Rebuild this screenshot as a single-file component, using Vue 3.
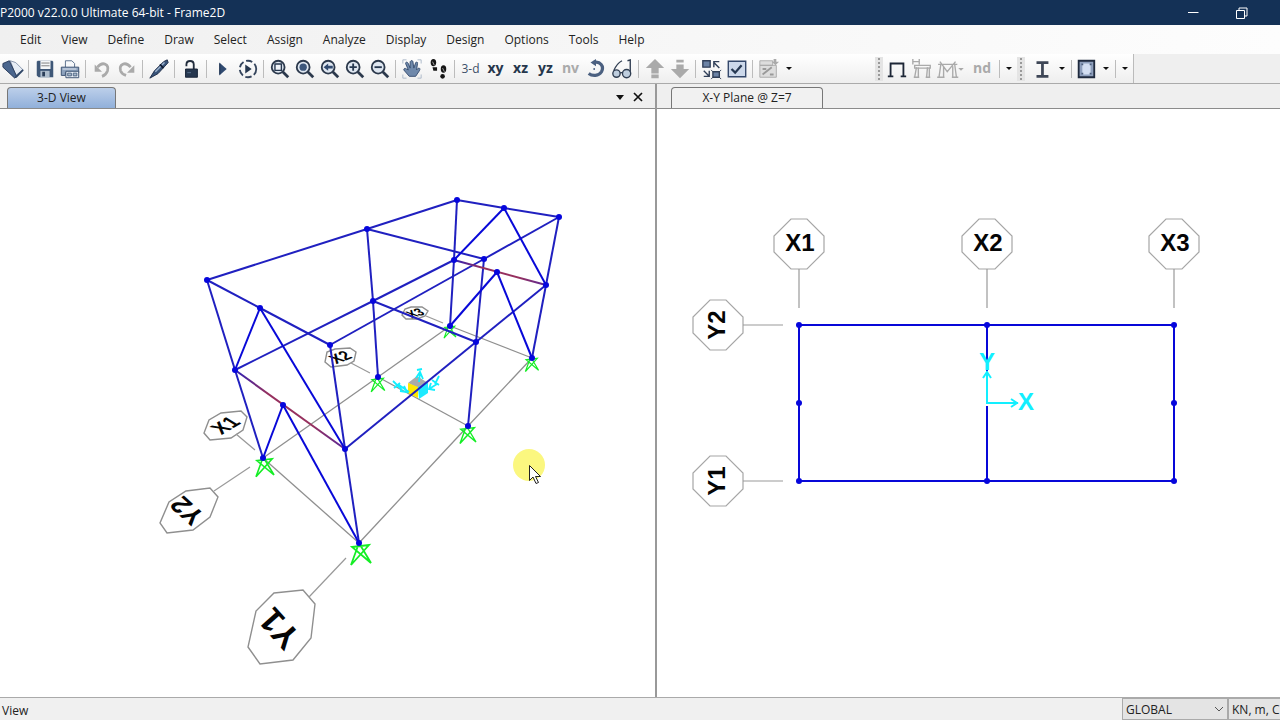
<script setup>
const menus = ['Edit', 'View', 'Define', 'Draw', 'Select', 'Assign', 'Analyze', 'Display', 'Design', 'Options', 'Tools', 'Help']

const joints = {
  A: [207, 280], B: [367, 229], C: [457, 200], D: [504, 208], E: [559, 217],
  F: [260, 308], G: [330, 345], H: [484, 259], I: [235, 370], J: [373, 301],
  K: [454, 260], L: [497, 272], M: [546, 285], N: [476, 342], O: [345, 449],
  P: [283, 405], Q: [263, 458], R: [378, 377], S: [450, 326], T: [532, 358],
  U: [468, 426], V: [359, 543]
}
const toLine = (pair) => {
  const [a, b] = pair
  return { id: pair, x1: joints[a][0], y1: joints[a][1], x2: joints[b][0], y2: joints[b][1] }
}
const gridLines = 'QR RS ST TU UV VQ RU'.split(' ').map(toLine)
const members = 'AB BC CD DE EH HG GF FA BH AI IQ BJ JR CK KS EM MT HN NU GO OV IJ JK MN NO JN'.split(' ').map(toLine)
const braces = 'FI FO DK DM PQ PV LS LT'.split(' ').map(toLine)
const beams = 'IO KM'.split(' ').map(toLine)

const supports = [
  { x: 361, y: 543, s: 1 },
  { x: 265, y: 457, s: 0.9 },
  { x: 468, y: 426, s: 0.8 },
  { x: 532, y: 357, s: 0.66 },
  { x: 378, y: 377, s: 0.68 },
  { x: 450, y: 325, s: 0.6 }
]

const bubbles3d = [
  { text: 'Y1', pts: '274,593 303,590 315,604 311,638 293,660 260,664 248,647 256,611', line: [309, 597, 346, 558], x: 279, y: 629, size: 34, t: 'rotate(228)' },
  { text: 'Y2', pts: '186,491 210,488 218,497 210,517 193,530 167,533 160,523 169,502', line: [214, 491, 250, 467], x: 187, y: 511, size: 26, t: 'rotate(222) skewX(-12)' },
  { text: 'X1', pts: '221,413 241,411 247,417 243,430 231,438 210,440 204,433 209,420', line: [236, 434, 255, 450], x: 225, y: 425, size: 19, t: 'rotate(-30) skewX(28)' },
  { text: 'X2', pts: '335,349 350,348 356,352 354,361 347,365 331,367 325,362 327,352', line: [351, 363, 370, 373], x: 340, y: 357, size: 15, t: 'rotate(-22) skewX(28)' },
  { text: 'X3', pts: '411,307 422,307 428,311 425,316 417,319 406,319 402,315 405,309', line: [426, 316, 443, 323], x: 415, y: 313, size: 12, t: 'rotate(-18) skewX(30)' }
]

const octagon = '-8,-25 8,-25 25,-8 25,8 8,25 -8,25 -25,8 -25,-8'
const bubblesX = [{ text: 'X1', x: 799 }, { text: 'X2', x: 987 }, { text: 'X3', x: 1174 }]
const bubblesY = [{ text: 'Y2', y: 325 }, { text: 'Y1', y: 481 }]
const planJoints = [[799, 325], [987, 325], [1174, 325], [799, 403], [1174, 403], [799, 481], [987, 481], [1174, 481]]
</script>

<template>
  <div class="app">
    <header class="titlebar">
      <h1>P2000 v22.0.0 Ultimate 64-bit - Frame2D</h1>
      <button class="win" aria-label="Minimize">
        <svg width="12" height="12" viewBox="0 0 12 12"><path d="M1 5.500h10.500" stroke="#fff" /></svg>
      </button>
      <button class="win" aria-label="Restore">
        <svg width="12" height="12" viewBox="0 0 12 12" fill="none" stroke="#fff"><path d="M.5 3.500h8v8h-8zM3 3.500v-2.500h8v8h-2.500" /></svg>
      </button>
    </header>

    <nav class="menu">
      <button v-for="m in menus" :key="m">{{ m }}</button>
    </nav>

    <div class="toolrow">
      <div class="tools main-tools">
        <button aria-label="New model">
          <svg viewBox="0 0 24 24">
            <path d="M9 3l6 2 8 8-8 6z" fill="#e7edf5" stroke="#8392a8" />
            <path d="M1 6l7-3 8 17-2 2L1 10z" fill="#4b668e" stroke="#26395a" />
            <path d="M15 21l8-8" stroke="#304767" stroke-width="2" />
          </svg>
        </button>
        <i class="sep"></i>
        <button aria-label="Save">
          <svg viewBox="0 0 24 24">
            <path d="M4 3h16l1 1v17H5l-2-2V4z" fill="#3e5777" />
            <path d="M7 3h11v9H7z" fill="#f4f6f8" /><path d="M8 5.500h9M8 8.500h9" stroke="#777" />
            <path d="M7 14h10v7H7z" fill="#aebdcd" /><path d="M9 15h3v5H9z" fill="#2b3e59" />
          </svg>
        </button>
        <button aria-label="Print">
          <svg viewBox="0 0 24 24">
            <path d="M7 10V3h7l3 3v4" fill="#f6f8fa" stroke="#536987" />
            <path d="M2.500 10h19v6H7v3H2.500z" fill="#8da2bd" stroke="#354c6c" />
            <path d="M7.500 14.500h14v7h-14z" fill="#e8eef6" stroke="#354c6c" />
            <path d="M9.500 16.500h4v3h-4zM15.500 16.500h4v3h-4z" fill="#a9b9cd" stroke="#48607f" />
            <path d="M4 12h15" stroke="#e9eef5" />
          </svg>
        </button>
        <i class="sep"></i>
        <button aria-label="Undo">
          <svg viewBox="0 0 24 24" fill="none" stroke="#aaa" stroke-width="3"><path d="M7 10c6-7 13-3 11 4-1 3-3 5-6 6" /><path d="M4 7v8h8z" fill="#aaa" stroke="none" /></svg>
        </button>
        <button aria-label="Redo">
          <svg viewBox="0 0 24 24" fill="none" stroke="#aaa" stroke-width="3"><path d="M16 10C10 3 3 7 5 14c1 3 3 4 6 5" /><path d="M20 8v8h-8z" fill="#aaa" stroke="none" /></svg>
        </button>
        <i class="sep"></i>
        <button aria-label="Refresh">
          <svg viewBox="0 0 24 24">
            <path d="M2 22l5-8L17 4l4-2 1 3-11 12z" fill="#39547a" stroke="#1b2a45" />
            <path d="M8 15L18 5" stroke="#9eb4cf" stroke-width="1.500" /><path d="M13 7l4 4" stroke="#111c33" stroke-width="2" />
          </svg>
        </button>
        <i class="sep"></i>
        <button aria-label="Unlock model">
          <svg viewBox="0 0 24 24"><path d="M7 9V7c0-5 8-5 8 0v5" fill="none" stroke="#222d3d" stroke-width="2" /><path d="M6 12h13v9H6z" fill="#26374f" stroke="#162236" /><path d="M8 16h4" stroke="#5d7595" /></svg>
        </button>
        <i class="sep"></i>
        <button aria-label="Run">
          <svg viewBox="0 0 24 24"><path d="M8 5v14l8-7z" fill="#304a70" /><path d="M8.500 6v12" stroke="#182b49" /></svg>
        </button>
        <button aria-label="Run options">
          <svg viewBox="0 0 24 24"><circle cx="12" cy="12" r="9" fill="none" stroke="#34445c" stroke-width="2" stroke-dasharray="7 3" /><path d="M9 7v10l7-5z" fill="#26374f" /></svg>
        </button>
        <i class="sep"></i>
        <button aria-label="Rubber band zoom">
          <svg viewBox="0 0 24 24"><circle cx="10" cy="10" r="7" class="lens" /><path d="M15 15l6 6" class="handle" /><path d="M6.500 6.500h7v7h-7z" fill="#f0f4f9" stroke="#26374f" stroke-width="1.500" /></svg>
        </button>
        <button aria-label="Restore full view">
          <svg viewBox="0 0 24 24"><circle cx="10" cy="10" r="7" class="lens" /><path d="M15 15l6 6" class="handle" /><circle cx="10" cy="10" r="4" fill="#3c567b" /></svg>
        </button>
        <button aria-label="Previous zoom">
          <svg viewBox="0 0 24 24"><circle cx="10" cy="10" r="7" class="lens" /><path d="M15 15l6 6" class="handle" /><path d="M5 10l5-4v2.500h5v3h-5V14z" fill="#304a70" /></svg>
        </button>
        <button aria-label="Zoom in">
          <svg viewBox="0 0 24 24"><circle cx="10" cy="10" r="7" class="lens" /><path d="M15 15l6 6" class="handle" /><path d="M6 10h8M10 6v8" stroke="#26374f" stroke-width="2" /></svg>
        </button>
        <button aria-label="Zoom out">
          <svg viewBox="0 0 24 24"><circle cx="10" cy="10" r="7" class="lens" /><path d="M15 15l6 6" class="handle" /><path d="M6 10h8" stroke="#26374f" stroke-width="2" /></svg>
        </button>
        <i class="sep"></i>
        <button aria-label="Pan">
          <svg viewBox="0 0 24 24">
            <path d="M2 6V2h4M18 2h4v4M2 18v4h4M18 22h4v-4" fill="none" stroke="#aab7c8" />
            <path d="M9 20l-6-7c0-2 2-2 3-1l2 1-3-7c0-2 2-2 3 0l2 5V4c1-2 3-1 3 0l1 7 2-6c1-1 3 0 2 1l-1 7 2-2c2 0 2 1 1 3l-4 6z" fill="#6f89ab" stroke="#344c6e" />
          </svg>
        </button>
        <button class="wide" aria-label="Walk">
          <svg viewBox="0 0 24 24"><g fill="#151515"><ellipse cx="7" cy="5" rx="3" ry="4" /><path d="M6 10h5v4H7z" /><ellipse cx="18" cy="12" rx="3" ry="4" /><ellipse cx="17" cy="20" rx="2.500" ry="2.500" /></g><path d="M6 4l2 4M17 11l2 4" stroke="#aaa" /></svg>
        </button>
        <i class="sep"></i>
        <button class="txt light">3-d</button>
        <button class="txt">xy</button>
        <button class="txt">xz</button>
        <button class="txt">yz</button>
        <button class="txt dim">nv</button>
        <button aria-label="Rotate view">
          <svg viewBox="0 0 24 24"><path d="M9 5c8-2 12 4 9 10-3 5-10 5-14 2" fill="none" stroke="#4b6080" stroke-width="3.500" /><path d="M12 1v8L6 5z" fill="#4b6080" /><circle cx="10" cy="12" r="1" fill="#4b6080" /></svg>
        </button>
        <button class="wide" aria-label="Perspective">
          <svg viewBox="0 0 24 24" fill="#bfcede" stroke="#303e52" stroke-width="1.500"><circle cx="6" cy="17" r="4" /><circle cx="17" cy="17" r="4.500" /><path d="M3 14c2-5 5-9 9-11M21 15V2l-3 1M10 16h3" fill="none" /></svg>
        </button>
        <i class="sep"></i>
        <button aria-label="Move up">
          <svg viewBox="0 0 24 24"><path d="M12 1l10 10h-6v6H8v-6H2zM8 18h8v4H8z" fill="#aaa" /></svg>
        </button>
        <button aria-label="Move down">
          <svg viewBox="0 0 24 24"><path d="M8 2h8v3H8zM8 7h8v5h6L12 22 2 12h6z" fill="#aaa" /></svg>
        </button>
        <i class="sep"></i>
        <button aria-label="Shrink objects">
          <svg viewBox="0 0 24 24" fill="none" stroke="#303f58" stroke-width="1.500"><path d="M2 3h8v7H2zM13 15h7v6h-7z" fill="#6c83a5" /><path d="M20 11l-6-6M14 10V4h6M3 14l6 6M9 14v6H3" /><path d="M11 13l2 2M20 15l2-2M13 21l-2 2M20 21l2 2" stroke-width="1" /></svg>
        </button>
        <button aria-label="Display options">
          <svg viewBox="0 0 24 24"><path d="M2.500 3.500h19v17h-19z" fill="#ccd8ea" stroke="#33476a" stroke-width="1.500" /><path d="M6 12l4 4 7-8" fill="none" stroke="#263852" stroke-width="2.500" /></svg>
        </button>
        <i class="sep"></i>
        <button aria-label="Assign to group">
          <svg viewBox="0 0 24 24"><path d="M2 3h14v5H2zM2 8h18v13H2z" fill="#ddd" stroke="#aaa" /><path d="M5 18l10-8M5 12h4M13 18h4" stroke="#999" stroke-width="2" /><path d="M17 1h3v3h3l-4 4-4-4h2z" fill="#aaa" /></svg>
        </button>
        <button class="drop" aria-label="More group commands"><i class="tri"></i></button>
      </div>

      <div class="tools side-tools">
        <i class="grip"></i>
        <button aria-label="Frame shape">
          <svg viewBox="0 0 24 24"><path d="M5 20V6h14v14M2 20h6M16 20h6" fill="none" stroke="#1d2636" stroke-width="2" /></svg>
        </button>
        <button aria-label="Frame loads">
          <svg viewBox="0 0 24 24" fill="none" stroke="#aaa" stroke-width="1.500"><path d="M2 1v6M9 1v6M2 4h7M4 8h17v3H4zM6 10L4 21M8 10v11M18 10l-1 11M20 10v11M3 21h6M16 21h5" /></svg>
        </button>
        <button class="moments" aria-label="Frame moments">
          <svg viewBox="0 0 30 24" fill="none" stroke="#aaa" stroke-width="1.500"><path d="M2 7h21M4 4l8 11L21 4M5 7L3 21M8 9v12M18 9v12M20 6l2 15M1 21h8M17 21h7" /><path d="M24 11h6l-3 3z" fill="#aaa" stroke="none" /></svg>
        </button>
        <button class="txt dim nd">nd</button>
        <i class="sep tight"></i>
        <button class="drop" aria-label="More named displays"><i class="tri"></i></button>
      </div>
      <div class="tools side-tools sections">
        <i class="grip"></i>
        <button aria-label="Frame section">
          <svg viewBox="0 0 24 24"><path d="M6 5h13M6 20h13M12.500 5v14" stroke="#3e4656" stroke-width="3" /></svg>
        </button>
        <button class="drop" aria-label="More frame sections"><i class="tri"></i></button>
        <i class="sep tight"></i>
        <button aria-label="Area section">
          <svg viewBox="0 0 24 24"><path d="M4 3h17v18H4z" fill="#8e9fbd" stroke="#1f2a3e" stroke-width="2" /><path d="M8 6h9v12H8z" fill="#d3def2" /><path d="M7 6h2v2H7zM16 6h2v2h-2zM7 16h2v2H7zM16 16h2v2h-2z" fill="#4d5f7e" /></svg>
        </button>
        <button class="drop" aria-label="More area sections"><i class="tri"></i></button>
        <i class="sep tight"></i>
        <button class="drop" aria-label="Toolbar options"><i class="tri"></i></button>
      </div>
    </div>

    <main class="panes">
      <section class="pane left">
        <div class="tabs">
          <button class="tab active">3-D View</button>
          <span class="grow"></span>
          <button class="mini" aria-label="Window list"><i class="tri big"></i></button>
          <button class="mini" aria-label="Close view">
            <svg width="10" height="10" viewBox="0 0 10 10"><path d="M1 1l8 8M9 1L1 9" stroke="#111" stroke-width="1.700" /></svg>
          </button>
        </div>
        <svg class="view" viewBox="0 109 655 588">
          <defs>
            <linearGradient id="beam" x1="0" x2="1" y1="0" y2="0">
              <stop offset="0" stop-color="#2a20b8" />
              <stop offset=".3" stop-color="#96305e" />
              <stop offset=".7" stop-color="#96305e" />
              <stop offset="1" stop-color="#5a2898" />
            </linearGradient>
          </defs>
          <g class="grid">
            <line v-for="l in gridLines" :key="l.id" :x1="l.x1" :y1="l.y1" :x2="l.x2" :y2="l.y2" />
          </g>
          <g class="support">
            <path v-for="s in supports" :key="s.x" :transform="`translate(${s.x} ${s.y}) scale(${s.s})`" d="M-2 0L-10 22L8 2L-9 4L10 20L-2 0" />
          </g>
          <g v-for="b in bubbles3d" :key="b.text">
            <polygon class="bubble" :points="b.pts" />
            <line class="leader" :x1="b.line[0]" :y1="b.line[1]" :x2="b.line[2]" :y2="b.line[3]" />
            <g :transform="`translate(${b.x} ${b.y}) ${b.t}`">
              <text class="mark" :font-size="b.size" :y="b.size * 0.36">{{ b.text }}</text>
            </g>
          </g>
          <g>
            <path d="M408 383l9-7 11 7-10 5z" fill="#aaa" />
            <path d="M408 383l10 4v11l-10-5z" fill="#ffe800" />
            <path d="M418 387l10-5v11l-9 6z" fill="#1eeaff" />
            <path class="axis" d="M419 382l1-9M416 378l4-6 3 7M417 370l5-1M409 392l-10-7M400 391l7 1-3-6M429 389l8-5M431 383l-2 6 6 1M393 381l9 9M394 388l6-5M432 380l7 5M439 376l-4 8" />
          </g>
          <g class="member">
            <line v-for="l in members" :key="l.id" :x1="l.x1" :y1="l.y1" :x2="l.x2" :y2="l.y2" />
          </g>
          <g class="beam">
            <line v-for="l in beams" :key="l.id" :x1="l.x1" :y1="l.y1" :x2="l.x2" :y2="l.y2" />
          </g>
          <g class="brace">
            <line v-for="l in braces" :key="l.id" :x1="l.x1" :y1="l.y1" :x2="l.x2" :y2="l.y2" />
          </g>
          <circle v-for="(j, k) in joints" :key="k" class="joint" :cx="j[0]" :cy="j[1]" r="3" />
          <circle cx="529" cy="465" r="16" fill="#fbf77f" />
          <path d="M529.500 465.500v15l3.500-3.500 3 6.500 2.500-1-3-6h5z" fill="#fff" stroke="#222" />
        </svg>
      </section>

      <section class="pane right">
        <div class="tabs">
          <button class="tab">X-Y Plane @ Z=7</button>
        </div>
        <svg class="view" viewBox="657 109 623 588">
          <g v-for="b in bubblesX" :key="b.text" :transform="`translate(${b.x} 244)`">
            <polygon class="bubble thin" :points="octagon" />
            <line class="leader" y1="25" y2="64" />
            <text class="mark" font-size="24" x="1" y="7">{{ b.text }}</text>
          </g>
          <g v-for="b in bubblesY" :key="b.text" :transform="`translate(718 ${b.y})`">
            <polygon class="bubble thin" :points="octagon" />
            <line class="leader" x1="25" x2="65" />
            <text class="mark" font-size="24" y="7" transform="rotate(-90)">{{ b.text }}</text>
          </g>
          <path class="plan" d="M799 325h375v156H799zM987 325v78M987 406v75" />
          <circle v-for="(j, k) in planJoints" :key="k" class="joint" :cx="j[0]" :cy="j[1]" r="3" />
          <path class="axis plan-axis" d="M987 371v32h31M983 378l4-6 4 6M1011 399l6 4-6 4" />
          <text class="mark cyan" font-size="24" x="987" y="370">Y</text>
          <text class="mark cyan" font-size="24" x="1026" y="410">X</text>
        </svg>
      </section>
    </main>

    <footer class="status">
      <span class="hint">View</span>
      <div class="combo">
        <select aria-label="Coordinate system"><option>GLOBAL</option></select>
        <svg width="10" height="6" viewBox="0 0 10 6"><path d="M1 1l4 4 4-4" fill="none" stroke="#555" /></svg>
      </div>
      <select class="units" aria-label="Units"><option>KN, m, C</option></select>
    </footer>
  </div>
</template>

<style>
body { margin: 0; overflow: hidden; }
</style>

<style scoped>
.app {
  display: flex; flex-direction: column; height: 100vh;
  font: 12px/16px "Open Sans", "Noto Sans", sans-serif; color: #222; background: #f0f0f0;
}
button { border: 0; padding: 0; margin: 0; background: none; font: inherit; color: inherit; }
.titlebar {
  display: flex; align-items: center; flex: none; height: 25px; padding-right: 14px; box-sizing: border-box;
  background: #143156; color: #fff;
}
h1 { flex: 1; margin: 0; font-size: 12px; font-weight: 400; line-height: 16px; }
.win { display: flex; align-items: center; justify-content: center; width: 49px; height: 24px; }
.menu {
  display: flex; align-items: center; gap: 20px; flex: none; height: 29px; padding-left: 20px;
  background: linear-gradient(90deg, #f0f0f0, #fdfdfd);
}
.toolrow { display: flex; flex: none; height: 29px; border-bottom: 1px solid #aaa; background: #efefef; }
.tools { display: flex; align-items: center; background: linear-gradient(#fff, #eee); }
.main-tools { flex: none; width: 875px; }
.side-tools { flex: none; }
.sections { border-right: 1px solid #bbb; }
.tools button { flex: none; display: flex; align-items: center; justify-content: center; width: 25px; height: 26px; }
.tools button.wide { width: 27px; }
.tools button.moments { width: 32px; }
.tools svg { width: 22px; height: 22px; }
.tools .moments svg { width: 28px; }
.tools button.drop { width: 16px; }
.sep { flex: none; width: 1px; height: 18px; margin: 0 3px; background: #bcbcbc; }
.sep.tight { margin: 0 1px; }
.grip {
  flex: none; width: 8px; height: 24px; margin-right: 1px;
  background: #e4e4e4 radial-gradient(circle at 4px 2px, #999 1px, transparent 1px) 0 0 / 8px 4px;
}
.sections .grip { margin-right: 4px; }
.tri { width: 0; height: 0; border: solid transparent; border-width: 3px 3px 0; border-top-color: #111; }
.tri.big { border-width: 5px 4px 0; border-top-color: #111; }
.tools .txt { font-weight: 700; font-size: 14px; color: #26364c; padding-bottom: 2px; }
.tools .light { font-weight: 400; font-size: 12px; color: #3d4f68; padding-bottom: 0; }
.tools .dim { color: #aaa; }
.tools .nd { width: 32px; }
.lens { fill: #dfe7f1; stroke: #2c394c; stroke-width: 2; }
.handle { stroke: #2c394c; stroke-width: 3; }

.panes { display: flex; flex: 1; min-height: 0; }
.pane { display: flex; flex-direction: column; min-width: 0; min-height: 0; }
.left { flex: 655; border-right: 2px solid #999; }
.right { flex: 623; }
.tabs { display: flex; align-items: flex-end; flex: none; height: 25px; box-sizing: border-box; border-bottom: 1px solid #8b8b8b; background: #efefef; padding-left: 7px; }
.right .tabs { padding-left: 14px; }
.tabs .tab { min-width: 109px; height: 21px; border: 1px solid #777; border-bottom: 0; border-radius: 4px 4px 0 0; background: #f1f1f1; }
.right .tabs .tab { min-width: 152px; }
.tabs .tab.active { background: linear-gradient(#bccfea, #91b0da); }
.grow { flex: 1; }
.mini { width: 18px; height: 22px; display: flex; align-items: center; justify-content: center; }
.mini:last-child { margin-right: 8px; }
.view { flex: 1; min-height: 0; width: 100%; background: #fff; display: block; }

.grid line { stroke: #8f8f8f; stroke-width: 1.3; }
.leader { stroke: #999; stroke-width: 1.2; }
.support path { fill: none; stroke: #14ee24; stroke-width: 1.8; }
.bubble { fill: #fff; stroke: #8f8f8f; stroke-width: 1.4; }
.bubble.thin { stroke: #a6a6a6; stroke-width: 1.2; }
.mark { font-family: "Liberation Sans", Arial, sans-serif; font-weight: 700; text-anchor: middle; fill: #050505; }
.cyan { fill: #12efff; }
.axis { fill: none; stroke: #12efff; stroke-width: 1.8; }
.plan-axis { stroke-width: 2; }
.member line { stroke: #2020c0; stroke-width: 2; }
.brace line, .plan { fill: none; stroke: #0808d8; stroke-width: 2; }
.beam line { stroke: url(#beam); stroke-width: 2; }
.joint { fill: #0606dc; }

.status { display: flex; flex: none; height: 23px; box-sizing: border-box; border-top: 1px solid #aaa; align-items: center; background: #f0f0f0; }
.hint { flex: 1; padding-left: 2px; padding-top: 3px; }
.combo { display: grid; align-items: center; width: 106px; height: 22px; }
.combo > * { grid-area: 1 / 1; }
.combo svg { justify-self: end; margin-right: 4px; pointer-events: none; }
select {
  appearance: none; box-sizing: border-box; width: 100%; height: 22px; margin: 0; padding: 2px 0 0 3px;
  border: 1px solid #aaa; border-radius: 0; background: #e4e4e4; color: #222; font: inherit;
}
.units { width: 52px; border-right: 0; }
</style>
